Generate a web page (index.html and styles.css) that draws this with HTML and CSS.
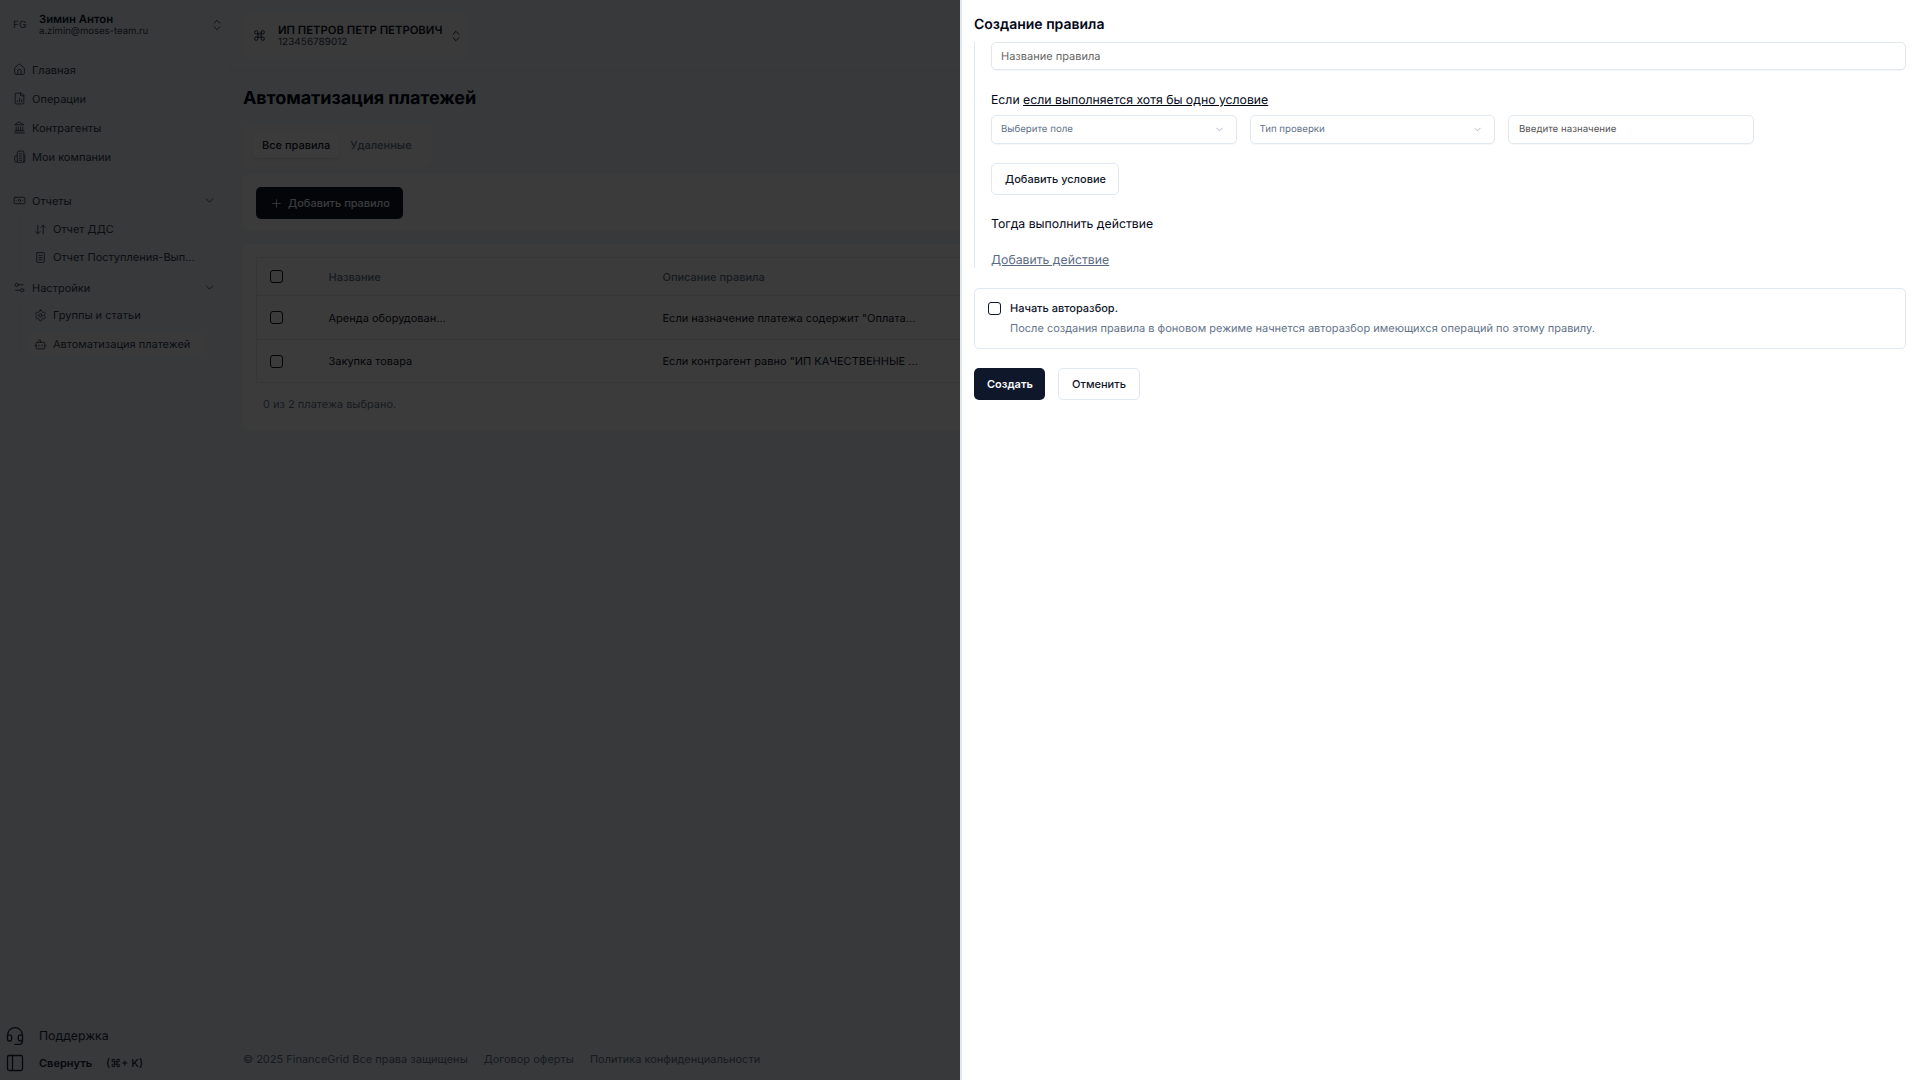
FILE: index.html
```html
<!DOCTYPE html>
<html lang="ru">
<head>
    <meta charset="UTF-8">
    <meta name="viewport" content="width=device-width, initial-scale=1.0">
    <title>Автоматизация платежей</title>
    <link rel="stylesheet" href="styles.css">
</head>
<body>

<div class="app">
    <aside class="sidebar">
        <div class="user">
            <span class="user-logo">FG</span>
            <div class="user-info">
                <div class="user-name">Зимин Антон</div>
                <div class="user-mail">a.zimin@moses-team.ru</div>
            </div>
            <svg class="icon user-switch" viewBox="0 0 24 24"><path d="m7 15 5 5 5-5"/><path d="m7 9 5-5 5 5"/></svg>
        </div>

        <nav class="nav">
            <a class="nav-item">
                <svg class="icon" viewBox="0 0 24 24"><path d="M15 21v-8a1 1 0 0 0-1-1h-4a1 1 0 0 0-1 1v8"/><path d="M3 10a2 2 0 0 1 .7-1.5l7-6a2 2 0 0 1 2.6 0l7 6A2 2 0 0 1 21 10v9a2 2 0 0 1-2 2H5a2 2 0 0 1-2-2z"/></svg>
                Главная
            </a>
            <a class="nav-item">
                <svg class="icon" viewBox="0 0 24 24"><path d="M15 2H6a2 2 0 0 0-2 2v16a2 2 0 0 0 2 2h12a2 2 0 0 0 2-2V7z"/><path d="M14 2v5h6"/><path d="M8 18v-2"/><path d="M12 18v-6"/><path d="M16 18v-4"/></svg>
                Операции
            </a>
            <a class="nav-item">
                <svg class="icon" viewBox="0 0 24 24"><path d="M3 22h18"/><path d="M6 18v-7"/><path d="M10 18v-7"/><path d="M14 18v-7"/><path d="M18 18v-7"/><path d="M12 2l8 5H4z"/><path d="M4 18h16"/></svg>
                Контрагенты
            </a>
            <a class="nav-item">
                <svg class="icon" viewBox="0 0 24 24"><path d="M8 22V4a2 2 0 0 1 2-2h8a2 2 0 0 1 2 2v18z"/><path d="M8 11H5a2 2 0 0 0-2 2v7a2 2 0 0 0 2 2h3"/><path d="M20 9h2v13h-2"/><path d="M12 7h4"/><path d="M12 11h4"/><path d="M12 15h4"/><path d="M12 19h4"/></svg>
                Мои компании
            </a>
        </nav>

        <div class="nav-group reports">
            <a class="nav-item">
                <svg class="icon" viewBox="0 0 24 24"><rect x="2" y="6" width="20" height="12" rx="2"/><circle cx="12" cy="12" r="2"/><path d="M6 12h.01M18 12h.01"/></svg>
                Отчеты
                <svg class="icon chevron" viewBox="0 0 24 24"><path d="m6 9 6 6 6-6"/></svg>
            </a>
            <div class="sub-list">
                <a class="sub-item">
                    <svg class="icon" viewBox="0 0 24 24"><path d="m3 16 4 4 4-4"/><path d="M7 20V4"/><path d="m21 8-4-4-4 4"/><path d="M17 4v16"/></svg>
                    Отчет ДДС
                </a>
                <a class="sub-item">
                    <svg class="icon" viewBox="0 0 24 24"><rect x="5" y="3" width="14" height="18" rx="1"/><path d="M9 8h6"/><path d="M9 12h6"/><path d="M9 16h6"/></svg>
                    Отчет Поступления-Вып...
                </a>
            </div>
        </div>

        <div class="nav-group">
            <a class="nav-item">
                <svg class="icon" viewBox="0 0 24 24"><path d="M14 17H5"/><path d="M19 7h-9"/><circle cx="17" cy="17" r="3"/><circle cx="7" cy="7" r="3"/></svg>
                Настройки
                <svg class="icon chevron" viewBox="0 0 24 24"><path d="m6 9 6 6 6-6"/></svg>
            </a>
            <div class="sub-list sub-list-tight">
                <a class="sub-item">
                    <svg class="icon" viewBox="0 0 24 24"><path d="M12.2 2h-.4a2 2 0 0 0-2 2v.2a2 2 0 0 1-1 1.7l-.4.3a2 2 0 0 1-2 0l-.2-.1a2 2 0 0 0-2.7.7l-.2.4a2 2 0 0 0 .7 2.7l.2.1a2 2 0 0 1 1 1.7v.5a2 2 0 0 1-1 1.7l-.2.1a2 2 0 0 0-.7 2.7l.2.4a2 2 0 0 0 2.7.7l.2-.1a2 2 0 0 1 2 0l.4.3a2 2 0 0 1 1 1.7v.2a2 2 0 0 0 2 2h.4a2 2 0 0 0 2-2v-.2a2 2 0 0 1 1-1.7l.4-.3a2 2 0 0 1 2 0l.2.1a2 2 0 0 0 2.7-.7l.2-.4a2 2 0 0 0-.7-2.7l-.2-.1a2 2 0 0 1-1-1.7v-.5a2 2 0 0 1 1-1.7l.2-.1a2 2 0 0 0 .7-2.7l-.2-.4a2 2 0 0 0-2.7-.7l-.2.1a2 2 0 0 1-2 0l-.4-.3a2 2 0 0 1-1-1.7V4a2 2 0 0 0-2-2z"/><circle cx="12" cy="12" r="3"/></svg>
                    Группы и статьи
                </a>
                <a class="sub-item active">
                    <svg class="icon" viewBox="0 0 24 24"><path d="M12 8V4H8"/><rect x="4" y="8" width="16" height="12" rx="2"/><path d="M2 14h2"/><path d="M20 14h2"/><path d="M15 13v2"/><path d="M9 13v2"/></svg>
                    Автоматизация платежей
                </a>
            </div>
        </div>

        <div class="sidebar-bottom">
            <a class="support">
                <svg class="icon" viewBox="0 0 24 24"><path d="M3 11h3a2 2 0 0 1 2 2v3a2 2 0 0 1-2 2H5a2 2 0 0 1-2-2v-5Zm0 0a9 9 0 1 1 18 0m0 0v5a2 2 0 0 1-2 2h-1a2 2 0 0 1-2-2v-3a2 2 0 0 1 2-2h3Z"/><path d="M21 16v2a4 4 0 0 1-4 4h-5"/></svg>
                Поддержка
            </a>
            <a class="collapse">
                <svg class="icon" viewBox="0 0 24 24"><rect x="3" y="3" width="18" height="18" rx="2"/><path d="M9 3v18"/></svg>
                <span>Свернуть</span>
                <span class="collapse-key">(⌘+ K)</span>
            </a>
        </div>
    </aside>

    <div class="main">
        <header class="topbar">
            <div class="company">
                <svg class="icon" viewBox="0 0 24 24"><path d="M15 6v12a3 3 0 1 0 3-3H6a3 3 0 1 0 3 3V6a3 3 0 1 0-3 3h12a3 3 0 1 0-3-3"/></svg>
                <div class="company-info">
                    <div class="company-name">ИП ПЕТРОВ ПЕТР ПЕТРОВИЧ</div>
                    <div class="company-inn">123456789012</div>
                </div>
                <svg class="icon company-switch" viewBox="0 0 24 24"><path d="m7 15 5 5 5-5"/><path d="m7 9 5-5 5 5"/></svg>
            </div>
        </header>

        <div class="content">
            <h1 class="page-title">Автоматизация платежей</h1>

            <div class="tabs">
                <span class="tab active">Все правила</span>
                <span class="tab">Удаленные</span>
            </div>

            <div class="card toolbar">
                <button class="add-rule">
                    <svg class="icon" viewBox="0 0 24 24"><path d="M5 12h14"/><path d="M12 5v14"/></svg>
                    Добавить правило
                </button>
            </div>

            <div class="card table-card">
                <table class="rules">
                    <tr class="rules-head">
                        <th class="col-check"><span class="check"></span></th>
                        <th class="col-name">Название</th>
                        <th>Описание правила</th>
                    </tr>
                    <tr class="row-first">
                        <td class="col-check"><span class="check"></span></td>
                        <td class="col-name">Аренда оборудован...</td>
                        <td>Если назначение платежа содержит "Оплата...</td>
                    </tr>
                    <tr>
                        <td class="col-check"><span class="check"></span></td>
                        <td class="col-name">Закупка товара</td>
                        <td>Если контрагент равно "ИП КАЧЕСТВЕННЫЕ ...</td>
                    </tr>
                </table>
                <div class="selected-count">0 из 2 платежа выбрано.</div>
            </div>
        </div>

        <footer class="footer">
            <span>© 2025 FinanceGrid Все права защищены</span>
            <span>Договор оферты</span>
            <span>Политика конфиденциальности</span>
        </footer>
    </div>
</div>

<div class="overlay"></div>

<section class="panel">
    <h2 class="panel-title">Создание правила</h2>

    <div class="rule-form">
        <div class="field field-name">Название правила</div>

        <p class="form-label">Если <u>если выполняется хотя бы одно условие</u></p>

        <div class="condition">
            <div class="field field-select">
                Выберите поле
                <svg class="icon" viewBox="0 0 24 24"><path d="m6 9 6 6 6-6"/></svg>
            </div>
            <div class="field field-select">
                Тип проверки
                <svg class="icon" viewBox="0 0 24 24"><path d="m6 9 6 6 6-6"/></svg>
            </div>
            <div class="field field-value">Введите назначение</div>
        </div>

        <button class="btn btn-outline add-condition">Добавить условие</button>

        <p class="form-label then-label">Тогда выполнить действие</p>

        <a class="add-action">Добавить действие</a>
    </div>

    <div class="auto-box">
        <span class="auto-check"></span>
        <div>
            <div class="auto-title">Начать авторазбор.</div>
            <div class="auto-desc">После создания правила в фоновом режиме начнется авторазбор имеющихся операций по этому правилу.</div>
        </div>
    </div>

    <div class="panel-actions">
        <button class="btn btn-dark">Создать</button>
        <button class="btn btn-outline btn-cancel">Отменить</button>
    </div>
</section>

</body>
</html>
```

FILE: styles.css
```css
* {
    box-sizing: border-box;
}
body {
    margin: 0;
    font-family: Inter, "Noto Sans", sans-serif;
    font-size: 11px;
    color: #0f172a;
    background-color: #f1f5f9;
    text-rendering: geometricPrecision;
    overflow: hidden;
}
p, h1, h2 {
    margin: 0;
}
.icon {
    width: 13px;
    height: 13px;
    flex: none;
    fill: none;
    stroke: currentColor;
    stroke-width: 1.6;
    stroke-linecap: round;
    stroke-linejoin: round;
}

/* sidebar */
.app {
    display: flex;
    height: 1080px;
}
.sidebar {
    display: flex;
    flex-direction: column;
    width: 230px;
    flex: none;
    background-color: #f1f5f9;
    border-right: 1px solid #e8ecf1;
    padding: 12px 0 0 13px;
    color: #334155;
}
.user {
    display: flex;
    align-items: center;
    height: 26px;
    margin-bottom: 17px;
}
.user-logo {
    width: 26px;
    font-size: 10px;
    color: #475569;
}
.user-info {
    flex: 1;
}
.user-name {
    font-size: 11.3px;
    line-height: 13px;
    font-weight: 600;
    color: #0f172a;
}
.user-mail {
    font-size: 9.5px;
    line-height: 12px;
}
.user-switch {
    margin-right: 5px;
    width: 14px;
    height: 14px;
}
.nav {
    display: flex;
    flex-direction: column;
    margin-bottom: 15px;
}
.nav-item {
    display: flex;
    align-items: center;
    gap: 6px;
    height: 29px;
    width: 203px;
}
.nav-item .chevron {
    margin-left: auto;
}
.sub-list {
    margin-left: 7px;
    padding-left: 8px;
    border-left: 1px solid #e8ecf1;
}
.sub-list-tight {
    display: flex;
    flex-direction: column;
    gap: 3px;
}
.sub-item {
    display: flex;
    align-items: center;
    gap: 6px;
    height: 28px;
    width: 176px;
    padding-left: 5px;
    border-radius: 6px;
    white-space: nowrap;
}
.sub-list-tight .sub-item {
    height: 26px;
}
.sub-item.active {
    background-color: #fafafa;
}
.reports {
    margin-bottom: 2px;
}
.sidebar-bottom {
    margin-top: auto;
    margin-left: -8px;
}
.support {
    display: flex;
    align-items: center;
    gap: 14px;
    height: 27px;
    font-size: 12.25px;
    color: #1e293b;
}
.support .icon, .collapse .icon {
    width: 20px;
    height: 20px;
}
.collapse {
    display: flex;
    align-items: center;
    height: 27px;
    margin-bottom: 4px;
    gap: 14px;
    font-weight: 600;
    color: #1e293b;
}
.collapse-key {
    font-weight: 500;
}

/* main part */
.main {
    flex: 1;
    display: flex;
    flex-direction: column;
    min-width: 0;
}
.topbar {
    height: 71px;
    flex: none;
    padding: 13px 13px 0;
    border-bottom: 1px solid #e8ecf1;
}
.company {
    display: inline-flex;
    align-items: center;
    width: 223px;
    height: 45px;
    padding: 0 3px 0 10px;
    border-radius: 6px;
    background-color: #fafafa;
}
.company-info {
    flex: 1;
    margin-left: 12px;
    min-width: 0;
}
.company-name {
    font-size: 11.3px;
    line-height: 13px;
    font-weight: 600;
    white-space: nowrap;
}
.company-inn {
    font-size: 10px;
    line-height: 11px;
    color: #334155;
}
.company-switch {
    width: 14px;
    height: 14px;
}
.content {
    flex: 1;
    padding: 13px 13px 0;
}
.page-title {
    font-size: 18px;
    line-height: 29px;
    height: 28px;
    font-weight: 700;
    letter-spacing: -0.1px;
    color: #020617;
}
.tabs {
    display: flex;
    gap: 2px;
    width: 188px;
    height: 44px;
    margin-top: 11px;
    padding: 9px 10px;
    border-radius: 6px;
    background-color: #f8f8f9;
}
.tab {
    display: flex;
    align-items: center;
    padding: 0 9px;
    border-radius: 4px;
    font-weight: 500;
    white-space: nowrap;
    color: #64748b;
}
.tab.active {
    color: #0f172a;
    background-color: #ffffff;
    box-shadow: 0 1px 2px rgba(0,0,0,0.1);
}
.card {
    background-color: #ffffff;
    border-radius: 6px;
}
.toolbar {
    margin-top: 7px;
    padding: 13px;
    height: 57px;
}
.add-rule {
    display: flex;
    align-items: center;
    gap: 5px;
    width: 147px;
    height: 32px;
    padding: 0 14px;
    border: 0;
    border-radius: 5px;
    background-color: #0f172a;
    color: #f8fafc;
    font-family: inherit;
    font-size: 11px;
    font-weight: 500;
    white-space: nowrap;
}
.table-card {
    margin-top: 13px;
    padding: 13px 13px 0;
    height: 187px;
}
.rules {
    width: 100%;
    border-collapse: collapse;
    border: 1px solid #e2e8f0;
    table-layout: fixed;
}
.rules th, .rules td {
    border-bottom: 1px solid #e2e8f0;
    text-align: left;
    padding: 0;
    white-space: nowrap;
}
.rules th {
    height: 38px;
    font-weight: 500;
    color: #64748b;
}
.rules td {
    height: 43px;
    color: #0f172a;
}
.rules .row-first td {
    height: 44px;
}
.col-check {
    width: 72px;
    padding-left: 13px !important;
}
.col-name {
    width: 334px;
}
.check {
    display: block;
    width: 13px;
    height: 13px;
    border: 1px solid #0f172a;
    border-radius: 3px;
}
.selected-count {
    margin-top: 14px;
    padding-left: 7px;
    color: #64748b;
}
.footer {
    display: flex;
    gap: 16px;
    height: 28px;
    padding-left: 13px;
    font-size: 11px;
    color: #64748b;
}

/* dialog on top */
.overlay {
    position: fixed;
    inset: 0;
    background-color: rgba(0,0,0,0.77);
}
.panel {
    position: fixed;
    top: 0;
    right: 0;
    bottom: 0;
    width: 960px;
    padding: 0 14px;
    background-color: #ffffff;
    border-left: 2px solid #e2e8f0;
}
.panel-title {
    margin-left: -2px;
    height: 42px;
    font-size: 14px;
    line-height: 49px;
    font-weight: 600;
    color: #020617;
}
.rule-form {
    margin-left: -2px;
    height: 226px;
    padding-left: 16px;
    border-left: 1px solid #e2e8f0;
}
.field {
    display: flex;
    align-items: center;
    height: 28px;
    padding: 0 9px;
    border: 1px solid #e2e8f0;
    border-radius: 5px;
    box-shadow: 0 1px 1px rgba(15,23,42,0.04);
    color: #64748b;
}
.field-name {
    color: #666666;
}
.form-label {
    margin-top: 21px;
    font-size: 12.25px;
    line-height: 18px;
    color: #020617;
}
.condition {
    display: flex;
    gap: 13px;
    margin-top: 6px;
}
.field-select, .field-value {
    width: 245.5px;
    height: 29px;
    font-size: 9.7px;
    justify-content: space-between;
}
.field-select .icon {
    width: 11px;
    height: 11px;
    margin-right: 2px;
    color: #94a3b8;
}
.field-value {
    padding-left: 10px;
    color: #555555;
}
.btn {
    height: 32px;
    padding: 0 13px;
    border-radius: 5px;
    font-family: inherit;
    font-size: 11px;
    font-weight: 500;
    white-space: nowrap;
}
.btn-outline {
    background-color: #ffffff;
    border: 1px solid #e2e8f0;
    color: #0f172a;
}
.btn-dark {
    width: 71px;
    border: 0;
    background-color: #0f172a;
    color: #f8fafc;
    font-weight: 600;
}
.btn-cancel {
    width: 82px;
}
.add-condition {
    display: block;
    width: 128px;
    margin-top: 19px;
}
.then-label {
    margin-top: 20px;
}
.add-action {
    display: block;
    margin-top: 18px;
    font-size: 12.25px;
    line-height: 18px;
    color: #5b6b82;
    text-decoration: underline;
}
.auto-box {
    display: flex;
    gap: 9px;
    margin-top: 20px;
    margin-left: -2px;
    height: 61px;
    padding: 11px 13px 0;
    border: 1px solid #e2e8f0;
    border-radius: 5px;
}
.auto-check {
    width: 13px;
    height: 13px;
    margin-top: 2px;
    flex: none;
    border: 1px solid #0f172a;
    border-radius: 3px;
}
.auto-title {
    font-weight: 500;
    line-height: 16px;
    color: #0f172a;
}
.auto-desc {
    margin-top: 3.5px;
    line-height: 16px;
    color: #64748b;
}
.panel-actions {
    display: flex;
    gap: 13px;
    margin-top: 19px;
    margin-left: -2px;
}
```
